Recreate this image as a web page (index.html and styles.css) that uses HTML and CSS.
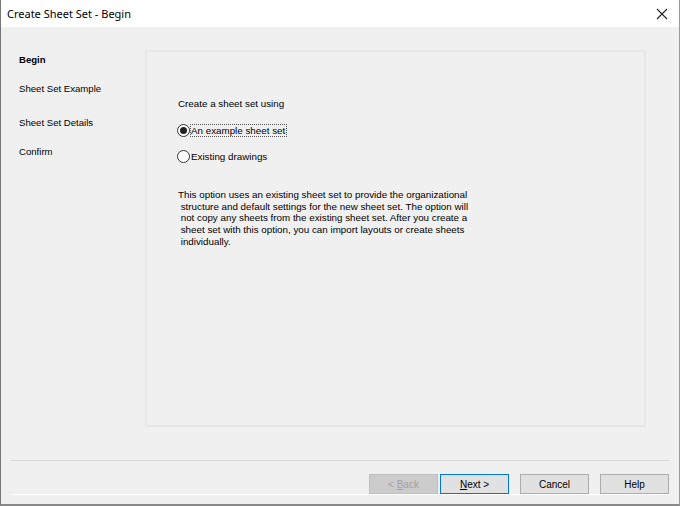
FILE: index.html
```html
<!DOCTYPE html>
<html lang="en">
<head>
  <meta charset="UTF-8">
  <title>Create Sheet Set - Begin</title>
  <link rel="stylesheet" href="styles.css">
</head>
<body>
  <div class="window">
    <!-- title bar -->
    <div class="titlebar">
      <span class="title">Create Sheet Set - Begin</span>
      <svg class="close" width="12" height="12" viewBox="0 0 12 12">
        <path d="M1 1 L11 11 M11 1 L1 11" stroke="#222" stroke-width="1.1" fill="none"/>
      </svg>
    </div>

    <div class="main">
      <div class="nav">
        <div class="step current">Begin</div>
        <div class="step">Sheet Set Example</div>
        <div class="step">Sheet Set Details</div>
        <div class="step">Confirm</div>
      </div>

      <div class="panel">
        <div class="prompt">Create a sheet set using</div>
        <label class="radio first">
          <span class="dot checked"></span>
          <span class="focus">An example sheet set</span>
        </label>
        <label class="radio">
          <span class="dot"></span>
          <span>Existing drawings</span>
        </label>
        <p class="desc">This option uses an existing sheet set to provide the organizational<br>
          &nbsp;structure and default settings for the new sheet set. The option will<br>
          &nbsp;not copy any sheets from the existing sheet set. After you create a<br>
          &nbsp;sheet set with this option, you can import layouts or create sheets<br>
          &nbsp;individually.</p>
      </div>
    </div>

    <div class="footer">
      <button class="btn" disabled>&lt; <u>B</u>ack</button>
      <button class="btn default"><u>N</u>ext &gt;</button>
      <button class="btn spaced">Cancel</button>
      <button class="btn spaced">Help</button>
    </div>
  </div>
</body>
</html>
```

FILE: styles.css
```css
html, body {
  margin: 0;
  padding: 0;
}

body {
  width: 680px;
  height: 506px;
  font-family: "Liberation Sans", Arial, sans-serif;
  font-size: 9.6px;
  color: #000;
  background: #fff;
}

.window {
  box-sizing: border-box;
  width: 680px;
  height: 506px;
  border-left: 1px solid #777;
  border-right: 1px solid #999;
  border-bottom: 2px solid #888;
  background: #f0f0f0;
  display: flex;
  flex-direction: column;
}

.titlebar {
  height: 27px;
  flex: none;
  background: #fff;
  display: flex;
  align-items: center;
  justify-content: space-between;
  padding: 0 11px 0 6px;
}

.title {
  font-family: "Noto Sans", "Open Sans", sans-serif;
  font-size: 11px;
  color: #000;
}

.main {
  display: flex;
  height: 377px;
  padding-top: 23px;
}

.nav {
  width: 126px;
  padding: 4px 0 0 18px;
  flex: none;
}

.step {
  height: 29px;
  line-height: 12px;
}

.step:nth-child(2) {
  height: 34px;
}

.current {
  font-weight: bold;
}

.panel {
  box-sizing: border-box;
  width: 501px;
  border: 2px solid #e8e8e8;
  border-right-color: #e6e6e6;
  border-bottom-color: #e6e6e6;
  padding: 46px 0 0 31px;
  font-size: 9.8px;
}

.prompt {
  height: 27px;
  line-height: 12px;
}

.radio {
  display: flex;
  align-items: center;
  height: 25px;
  margin-left: -1px;
}

.radio.first {
  margin-top: -7px;
  margin-bottom: 1px;
}

.dot {
  box-sizing: border-box;
  width: 13px;
  height: 13px;
  border: 1px solid #333;
  border-radius: 50%;
  background: #fff;
  margin-right: 1px;
  position: relative;
}

.dot.checked::after {
  content: "";
  position: absolute;
  left: 2px;
  top: 2px;
  width: 7px;
  height: 7px;
  border-radius: 50%;
  background: #222;
}

.focus {
  outline: 1px dotted #555;
  outline-offset: 0;
  padding-right: 1px;
}

.desc {
  margin: 20px 0 0 0;
  line-height: 11.7px;
}

.footer {
  margin: 33px 10px 0 10px;
  border-top: 1px solid #d8d8d8;
  box-shadow: 0 1px 0 #fff;
  padding-top: 13px;
  display: flex;
  justify-content: flex-end;
}

.btn {
  box-sizing: border-box;
  width: 69px;
  height: 20px;
  margin-left: 2px;
  background: #e1e1e1;
  border: 1px solid #adadad;
  font-family: "Liberation Sans", Arial, sans-serif;
  font-size: 10px;
  color: #000;
  padding: 0;
}

.btn:disabled {
  color: #a0a0a0;
  background: #cccccc;
  border-color: #bfbfbf;
}

.btn.default {
  border: 1px solid #0078d7;
  box-shadow: inset 0 0 0 1px #e1e1e1;
}

.btn.spaced {
  margin-left: 11px;
}
```
